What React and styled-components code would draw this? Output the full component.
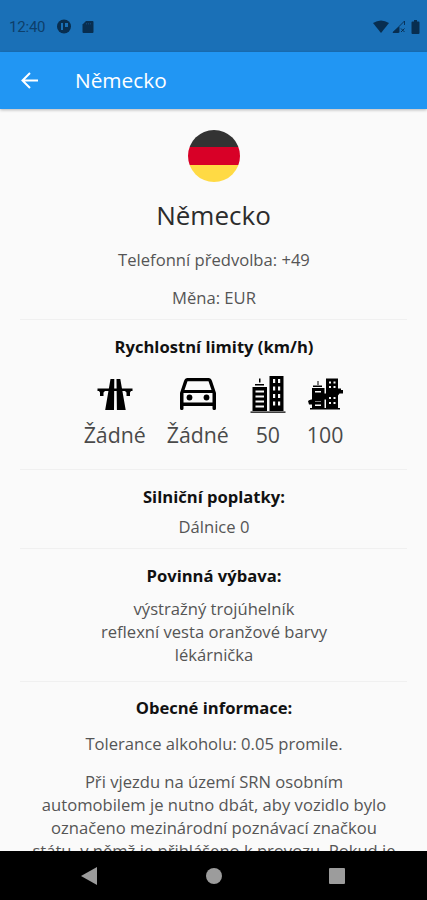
import React from 'react';
import styled, { createGlobalStyle } from 'styled-components';

const Global = createGlobalStyle`
  *{box-sizing:border-box}
  body{margin:0;background:#fafafa}
`;
const Screen = styled.div`
  width:427px;height:900px;display:flex;flex-direction:column;overflow:hidden;
  background:#fafafa;font-family:"Open Sans","Noto Sans",sans-serif;color:#222;
`;
const StatusBar = styled.header`
  height:52px;flex:none;background:#1a70b7;display:flex;align-items:center;
  justify-content:space-between;padding:1px 7px 0 9px;
`;
const StatusGroup = styled.div`display:flex;align-items:center;gap:${p => p.$gap}px;`;
const Clock = styled.span`font:400 15px/20px Roboto,sans-serif;color:#0d3f6b;letter-spacing:-.2px;width:37px;white-space:nowrap;`;
const AppBar = styled.nav`
  height:57px;flex:none;background:#2196f3;display:flex;align-items:center;padding-left:20px;gap:33px;
  box-shadow:0 1px 3px rgba(0,0,0,.28);z-index:1;
`;
const BarTitle = styled.h1`margin:0 0 2px;font-size:20.8px;line-height:28px;font-weight:400;color:#fff;`;
const Content = styled.main`
  flex:1;min-height:0;overflow:hidden;display:flex;flex-direction:column;align-items:center;padding:21px 20px 0;
  & > *{flex:none}
`;
const Country = styled.h2`margin:15px 0 0;font-size:26px;line-height:36px;font-weight:400;color:#2c2c2c;`;
const Line = styled.p`
  margin:${p => p.$top || 0}px 0 0;padding-left:1px;font-size:16.6px;line-height:23px;font-weight:400;
  text-align:center;white-space:nowrap;color:#555;
`;
const Heading = styled.h3`margin:${p => p.$top}px 0 0;padding-left:1px;font-size:16.6px;line-height:23px;font-weight:700;color:#111;`;
const Divider = styled.hr`width:387px;height:1px;border:0;margin:${p => p.$top}px 0 0;background:#f0f0f0;`;
const Limits = styled.div`display:flex;gap:21px;margin-top:16px;`;
const Limit = styled.div`display:flex;flex-direction:column;align-items:center;`;
const LimitValue = styled.span`font-size:21.3px;line-height:30px;font-weight:400;margin-top:6px;color:#4a4a4a;`;
const NavBar = styled.footer`
  height:49px;flex:none;background:#000;display:flex;align-items:center;justify-content:space-between;padding:0 81px;
`;

const Motorway = () => <svg width="40" height="40" viewBox="0 0 40 40" fill="#000">
  <path d="M15.500 5h3.800l-.3 31h-8.800zM21.500 5h3.800l5.400 31h-8.800z" />
  <path d="M2.500 14.500h35v2.500h-1.500l-1 1.500v3.500h-3.500v-3.500l-1.500-1.500H10l-1.500 1.500v3.500H5v-3.500l-1-1.500H2.500z" />
</svg>;
const Car = () => <svg width="40" height="40" viewBox="0 0 40 40">
  <path fill="#000" fillRule="evenodd" d="M9.500 4h21q2.500 0 3.500 3l4 12v15.500q0 1.500-1.500 1.500H36q-1.500 0-1.500-1.500V32h-29v2.500Q5.500 36 4 36h-.5Q2 36 2 34.500V19L6 7q1-3 3.500-3zM9.500 7.300L6.500 16h27L30.500 7.300zM5.500 19v9.500h29V19z" />
  <circle cx="11.500" cy="23.500" r="2.900" /><circle cx="28.500" cy="23.500" r="2.900" />
</svg>;
const City = () => <svg width="36" height="40" viewBox="0 0 36 40" fill="#000">
  <path fillRule="evenodd" d="M19.500 2H33.500V37H19.500zM23 5v4h2.200V5zm5 0v4h2.200V5zm-5 7.500v4h2.200v-4zm5 0v4h2.200v-4zm-5 7.500v4h2.200v-4zm5 0v4h2.200v-4zm-5 7.500v4h2.200v-4zm5 0v4h2.200v-4z" />
  <path fillRule="evenodd" d="M2.500 13H17V37H2.500zM5.500 16.500v2H14v-2zm0 5v2H14v-2zm0 5v2H14v-2zm0 5v2H14v-2z" />
  <path d="M5 10h9v1.500H5zM9 4.500h1.500v4H9zM.5 37.500h35v1.200H.5z" />
</svg>;
const Countryside = () => <svg width="36" height="40" viewBox="0 0 36 40" fill="#000">
  <path fillRule="evenodd" d="M19 4.500h12V34H19zM22 7.500v2h2v-2zm4.500 0v2h2v-2zM22 12v2h2v-2zm4.500 0v2h2v-2zM22 23v2h2v-2zm4.500 0v2h2v-2zM22 28v2h2v-2zm4.500 0v2h2v-2z" />
  <path fillRule="evenodd" d="M5 14h12.500v20H5zM8 17v1.500h6V17zm0 9.500V28h6v-1.500zm0 4V32h6v-1.500z" />
  <path d="M6 11.500h9V13H6zM10.500 7h1v4h-1zM3 34h30v1.500H3z" />
  <path d="M1 27q2-2 4-1.500v-4h9l3-2h5l2-1h4l3-4h3v1.500h2v3.500h-3.500l-1.500 2h-4l-2 1h-4v3h-4l-2 2H8l-1 3H2z" />
</svg>;

export default function App() {
  return <><Global /><Screen>
    <StatusBar>
      <StatusGroup $gap={11}>
        <Clock>12:40</Clock>
        <svg width="14" height="15" viewBox="0 0 14 15"><circle cx="7" cy="7.500" r="7" fill="#082e50" /><path d="M4 4h2v7H4zM8 4h3v4H8z" fill="#1a70b7" /></svg>
        <svg width="12" height="14" viewBox="0 0 12 14"><path d="M4 1h6.500q1 0 1 1v10q0 1-1 1h-9q-1 0-1-1V4.500z" fill="#082e50" /><path d="M4.500 3v1.500M6.500 3v1.500M8.500 3v1.500" stroke="#17528a" strokeWidth=".6" /></svg>
      </StatusGroup>
      <StatusGroup $gap={3}>
        <svg width="16" height="13" viewBox="0 0 16 13"><path d="M0 3Q8-2 16 3L8 13z" fill="#082e50" /></svg>
        <svg width="16" height="13" viewBox="0 0 16 13" fill="none" stroke="#082e50"><path d="M1 12.500L12.500 1v4M7 7v5.500" strokeWidth=".9" /><path d="M1 12.500l5.500-5v5z" fill="#082e50" /><path d="M9 8.500l3.500 3.500M12.500 8.500L9 12" /></svg>
        <svg width="9" height="14" viewBox="0 0 9 14"><path d="M3 0h3v1.500h1.500q1 0 1 1V13q0 1-1 1h-6q-1 0-1-1V2.500q0-1 1-1H3z" fill="#082e50" /></svg>
      </StatusGroup>
    </StatusBar>
    <AppBar>
      <svg width="22" height="22" viewBox="0 0 22 22" fill="none" stroke="#fff" strokeWidth="2"><path d="M18 10.500H3M10 3L2.500 10.500l7.500 7.500" /></svg>
      <BarTitle>Německo</BarTitle>
    </AppBar>
    <Content>
      <svg width="52" height="52" viewBox="0 0 52 52"><defs><clipPath id="flag"><circle cx="26" cy="26" r="26" /></clipPath></defs><g clipPath="url(#flag)"><path fill="#333" d="M0 0h52v17H0z" /><path fill="#d80027" d="M0 17h52v18H0z" /><path fill="#ffda44" d="M0 35h52v17H0z" /></g></svg>
      <Country>Německo</Country>
      <Line $top={15}>Telefonní předvolba: +49</Line>
      <Line $top={15}>Měna: EUR</Line>
      <Divider $top={10} />
      <Heading $top={15}>Rychlostní limity (km/h)</Heading>
      <Limits>
        <Limit><Motorway /><LimitValue>Žádné</LimitValue></Limit>
        <Limit><Car /><LimitValue>Žádné</LimitValue></Limit>
        <Limit><City /><LimitValue>50</LimitValue></Limit>
        <Limit><Countryside /><LimitValue>100</LimitValue></Limit>
      </Limits>
      <Divider $top={19} />
      <Heading $top={15}>Silniční poplatky:</Heading>
      <Line $top={7}>Dálnice 0</Line>
      <Divider $top={10} />
      <Heading $top={15}>Povinná výbava:</Heading>
      <Line $top={10}>výstražný trojúhelník<br />reflexní vesta oranžové barvy<br />lékárnička</Line>
      <Divider $top={15} />
      <Heading $top={14}>Obecné informace:</Heading>
      <Line $top={13}>Tolerance alkoholu: 0.05 promile.</Line>
      <Line $top={15}>Při vjezdu na území SRN osobním<br />automobilem je nutno dbát, aby vozidlo bylo<br />označeno mezinárodní poznávací značkou<br />státu, v němž je přihlášeno k provozu. Pokud je</Line>
    </Content>
    <NavBar>
      <svg width="17" height="18" viewBox="0 0 17 18"><path d="M0 9L16 0v18z" fill="#9c9c9c" /></svg>
      <svg width="16" height="16" viewBox="0 0 16 16"><circle cx="8" cy="8" r="8" fill="#9c9c9c" /></svg>
      <svg width="17" height="16" viewBox="0 0 17 16"><rect width="16" height="16" rx="1" fill="#9c9c9c" /></svg>
    </NavBar>
  </Screen></>;
}
